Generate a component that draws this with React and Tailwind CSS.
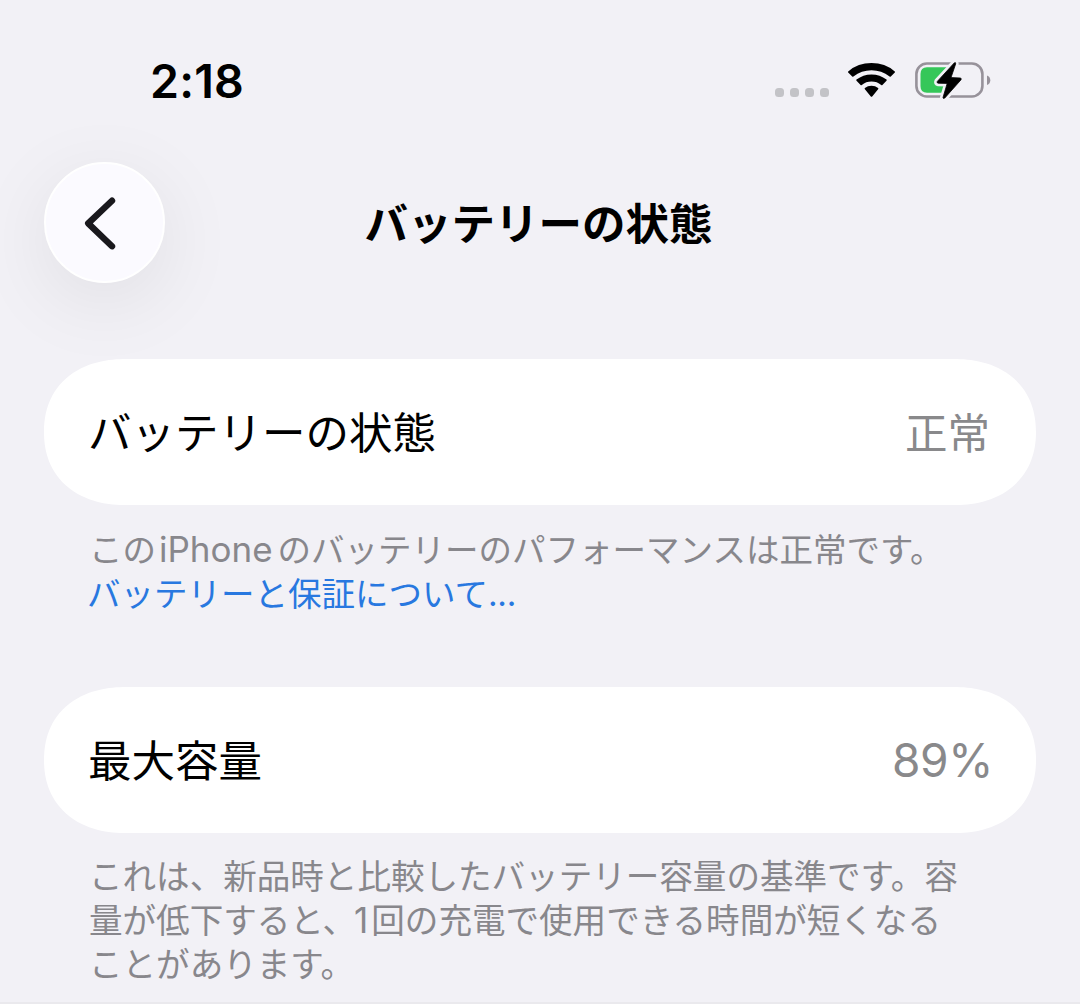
import React from 'react';

const StatusBar = () => {
    return (
      <div className="flex h-[160px] justify-between pr-[88px] pl-[150px]">
        <div className="mt-[53px] h-[56px] text-[46.5px] leading-[56px] font-semibold tracking-[0.2px]">2:18</div>
        <div className="flex">
          <div className="mt-[88px] mr-[-1px] flex h-[9px] gap-[6px]">
            {[0, 1, 2, 3].map((dot) => (
              <span className="h-[9px] w-[9px] rounded-[3.5px] bg-[#c3c3c7]" key={dot} />
            ))}
          </div>
          <svg className="mt-[60px] ml-[18px]" width="52" height="40" viewBox="0 0 52 40">
            <path d="M2.2 12.6 Q1.6 12 2.2 11.4 Q12 3.1 25.5 3.1 Q39 3.1 48.8 11.4 Q49.4 12 48.8 12.6 L44.8 16.6 Q44.2 17.1 43.6 16.6 Q35.5 10.2 25.5 10.2 Q15.5 10.2 7.4 16.6 Q6.8 17.1 6.2 16.6 Z" />
            <path d="M10.5 20.8 Q9.9 20.2 10.5 19.6 Q17 14.4 25.5 14.4 Q34 14.4 40.5 19.6 Q41.1 20.2 40.5 20.8 L36.4 24.9 Q35.8 25.4 35.2 24.9 Q31 21.5 25.5 21.5 Q20 21.5 15.8 24.9 Q15.2 25.4 14.6 24.9 Z" />
            <path d="M18.9 29.2 Q18.3 28.6 18.9 28.1 Q21.7 25.7 25.5 25.7 Q29.3 25.7 32.1 28.1 Q32.7 28.6 32.1 29.2 L26.2 36.5 Q25.5 37.2 24.8 36.5 Z" />
          </svg>
          <svg className="mt-[58px] ml-[14px]" width="80" height="44" viewBox="0 0 80 44">
            <rect x="4.4" y="5.5" width="66" height="33" rx="10.5" fill="none" stroke="#97929a" strokeWidth="2.6" />
            <path d="M75 17.5 Q78.3 18.8 78.3 22.2 Q78.3 25.6 75 27 Z" fill="#97929a" />
            <path d="M15 9.2 H36 V34.8 H15 Q8.5 34.8 8.5 28 V16 Q8.5 9.2 15 9.2 Z" fill="#35c759" />
            <path d="M42.2 5 L25.3 23.4 Q24.5 25 26.2 25.2 L35.2 25.4 L31 39.5 Q31.2 41.2 32.8 40 L49 21.8 Q49.8 20.2 48.2 20 L39 19.6 L43.7 5.8 Q43.7 3.8 42.2 5 Z" stroke="#f2f1f6" strokeWidth="6" strokeLinejoin="round" />
            <path d="M42.2 5 L25.3 23.4 Q24.5 25 26.2 25.2 L35.2 25.4 L31 39.5 Q31.2 41.2 32.8 40 L49 21.8 Q49.8 20.2 48.2 20 L39 19.6 L43.7 5.8 Q43.7 3.8 42.2 5 Z" stroke="#000" strokeWidth="0.8" strokeLinejoin="round" />
          </svg>
        </div>
      </div>
    );
};

const Header = () => {
    return (
      <div className="grid h-[199px] grid-cols-[180px_1fr_180px] px-11 pt-[2px]">
        <button className="flex h-[121px] w-[121px] items-center justify-center rounded-full border-2 border-white bg-[#fbfaff] shadow-[0_18px_80px_rgba(0,0,0,0.08)]">
          <svg className="mr-[9px]" width="40" height="60" viewBox="0 0 40 60" fill="none" stroke="#19181d" strokeWidth="6.4" strokeLinecap="round" strokeLinejoin="round">
            <path d="M32 7.7 L8.2 30.4 L32 53.2" />
          </svg>
        </button>
        <h1 className="mt-[32px] mr-[3px] text-center text-[43.5px] leading-[60px] font-semibold whitespace-nowrap">バッテリーの状態</h1>
      </div>
    );
};

const Card = ({ label, value }) => {
    return (
      <div className="mx-11 flex h-[146px] items-center justify-between rounded-[82px/73px] bg-white pr-[46px] pl-[44px] [corner-shape:superellipse(1.15)]">
        <span className="mt-[2px] text-[43.5px] leading-[60px]">{label}</span>
        {value}
      </div>
    );
};

const App = () => {
    return (
      <div className="flex h-[1004px] w-[1080px] flex-col overflow-hidden border-b-2 border-[#eae9ed] bg-[#f2f1f6] font-[Inter,'Noto_Sans_CJK_JP',sans-serif] text-black" lang="ja">
        <StatusBar />
        <Header />

        <Card
          label="バッテリーの状態"
          value={<span className="mt-[4px] text-[42.5px] leading-[60px] text-[#89898b]">正常</span>}
        />
        <div className="mt-[23px] h-[159px] pl-[89px] text-[33.5px] leading-[44px] whitespace-nowrap text-[#88878c]">
          <p>この<span className="mr-[5px] ml-[3px] text-[35px] leading-none">iPhone</span>のバッテリーのパフォーマンスは正常です。</p>
          <p className="-ml-[2px] text-[#2878e0]">バッテリーと保証について<span className="tracking-[-0.3px]">...</span></p>
        </div>

        <Card
          label="最大容量"
          value={<span className="mr-[-3px] text-[46px] leading-[60px] tracking-[-0.4px] text-[#89898b]">89%</span>}
        />
        <div className="mt-[22px] pl-[89px] text-[33.55px] leading-[44px] whitespace-nowrap text-[#88878c]">
          <p>これは、新品時と比較したバッテリー容量の基準です。容</p>
          <p>量が低下すると、<span className="mr-[3px] ml-[-2px] text-[35px] leading-none">1</span>回の充電で使用できる時間が短くなる</p>
          <p>ことがあります。</p>
        </div>
      </div>
    );
};

export default App;
